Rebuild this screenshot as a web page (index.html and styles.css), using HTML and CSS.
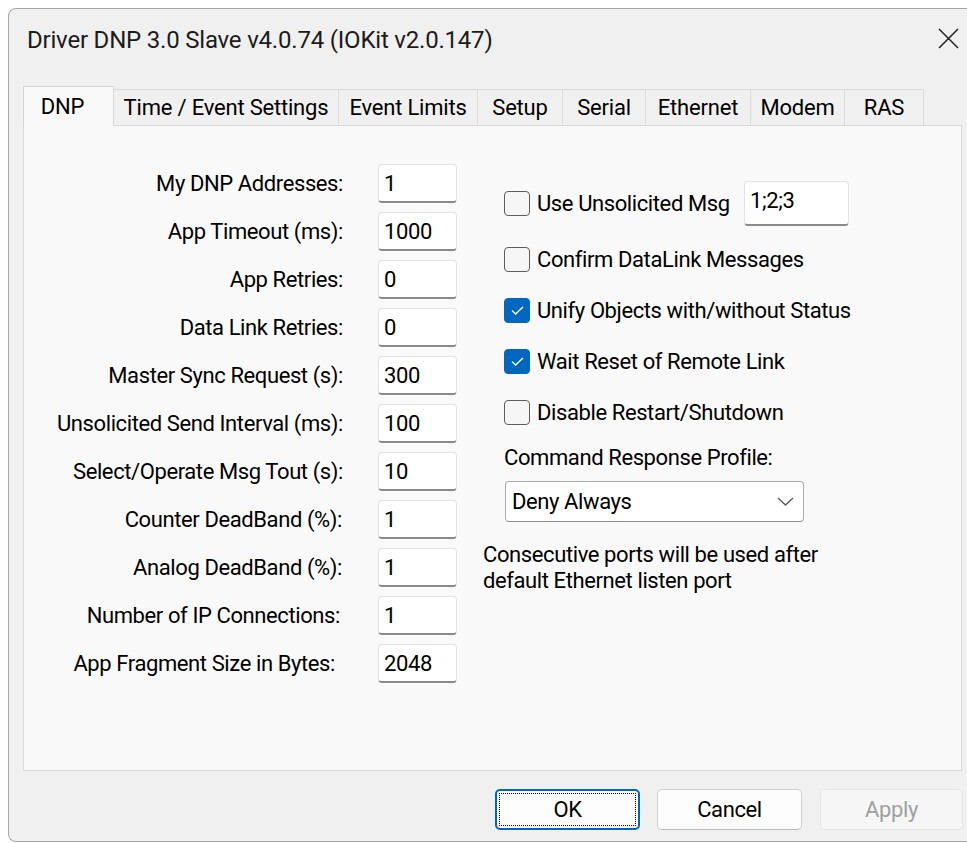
FILE: index.html
```html
<!DOCTYPE html>
<html lang="en">
<head>
<meta charset="utf-8">
<title>Driver DNP 3.0 Slave</title>
<link rel="stylesheet" href="styles.css">
</head>
<body>
<div class="window">
  <header class="titlebar">
    <span class="title">Driver DNP 3.0 Slave v4.0.74 (IOKit v2.0.147)</span>
    <svg class="close" viewBox="0 0 21 21" aria-label="Close">
      <path d="M1 1 L20 20 M20 1 L1 20" stroke="#1f1f1f" stroke-width="1.5" fill="none"/>
    </svg>
  </header>

  <nav class="tabstrip">
    <div class="tab is-active">DNP</div>
    <div class="tab">Time / Event Settings</div>
    <div class="tab">Event Limits</div>
    <div class="tab">Setup</div>
    <div class="tab">Serial</div>
    <div class="tab">Ethernet</div>
    <div class="tab">Modem</div>
    <div class="tab">RAS</div>
  </nav>

  <section class="panel">
    <div class="fields">
      <label class="lbl">My DNP Addresses:</label>
      <input class="field" type="text" value="1">
      <label class="lbl">App Timeout (ms):</label>
      <input class="field" type="text" value="1000">
      <label class="lbl">App Retries:</label>
      <input class="field" type="text" value="0">
      <label class="lbl">Data Link Retries:</label>
      <input class="field" type="text" value="0">
      <label class="lbl">Master Sync Request (s):</label>
      <input class="field" type="text" value="300">
      <label class="lbl">Unsolicited Send Interval (ms):</label>
      <input class="field" type="text" value="100">
      <label class="lbl">Select/Operate Msg Tout (s):</label>
      <input class="field" type="text" value="10">
      <label class="lbl lbl-in1">Counter DeadBand (%):</label>
      <input class="field" type="text" value="1">
      <label class="lbl lbl-in1">Analog DeadBand (%):</label>
      <input class="field" type="text" value="1">
      <label class="lbl lbl-in3">Number of IP Connections:</label>
      <input class="field" type="text" value="1">
      <label class="lbl lbl-in8">App Fragment Size in Bytes:</label>
      <input class="field" type="text" value="2048">
    </div>

    <div class="options">
      <div class="opt opt-first">
        <span class="check"></span>
        <span class="opt-text">Use Unsolicited Msg</span>
        <textarea class="multi" rows="1">1;2;3</textarea>
      </div>
      <div class="opt">
        <span class="check"></span>
        <span class="opt-text">Confirm DataLink Messages</span>
      </div>
      <div class="opt">
        <span class="check is-checked"><svg viewBox="0 0 13 9"><path d="M1 4.6 L4.6 8 L12 1" stroke="#fff" stroke-width="1.4" fill="none"/></svg></span>
        <span class="opt-text">Unify Objects with/without Status</span>
      </div>
      <div class="opt">
        <span class="check is-checked"><svg viewBox="0 0 13 9"><path d="M1 4.6 L4.6 8 L12 1" stroke="#fff" stroke-width="1.4" fill="none"/></svg></span>
        <span class="opt-text">Wait Reset of Remote Link</span>
      </div>
      <div class="opt">
        <span class="check"></span>
        <span class="opt-text">Disable Restart/Shutdown</span>
      </div>

      <div class="caption">Command Response Profile:</div>
      <div class="select">
        <span class="select-value">Deny Always</span>
        <svg class="chevron" viewBox="0 0 17 9"><path d="M1 1 L8.5 8 L16 1" stroke="#5a5a5a" stroke-width="1.3" fill="none"/></svg>
      </div>

      <p class="note">Consecutive ports will be used after<br>default Ethernet listen port</p>
    </div>
  </section>

  <footer class="actions">
    <button class="btn btn-default" type="button">OK</button>
    <button class="btn" type="button">Cancel</button>
    <button class="btn btn-disabled" type="button" disabled>Apply</button>
  </footer>
</div>
</body>
</html>
```

FILE: styles.css
```css
* {
  box-sizing: border-box;
}

html,
body {
  margin: 0;
  height: 100%;
}

body {
  background: #ffffff;
  overflow: hidden;
  font-family: Roboto, "Liberation Sans", sans-serif;
  font-size: 22px;
  letter-spacing: -0.4px;
  color: #000;
}

/* dialog frame */
.window {
  margin: 8px 0 0 8px;
  width: 959px;
  height: 834px;
  background: #f0f0f0;
  border: 1px solid #a8a8a8;
  border-right: none;
  border-radius: 8px 0 0 8px;
  display: flex;
  flex-direction: column;
}

.titlebar {
  height: 62px;
  flex: none;
  display: flex;
  align-items: center;
  padding: 0 8px 0 18px;
}

.title {
  flex: 1;
  font-size: 24px;
  letter-spacing: -0.2px;
  color: #1b1b1b;
  white-space: nowrap;
}

.close {
  width: 21px;
  height: 21px;
  margin-bottom: 4px;
}

/* property sheet tabs */
.tabstrip {
  flex: none;
  height: 39px;
  margin-top: 15px;
  padding-left: 14px;
  display: flex;
  align-items: flex-end;
}

.tab {
  height: 36px;
  margin-left: -1px;
  display: flex;
  align-items: center;
  justify-content: center;
  background: #f0f0f0;
  border: 1px solid #dcdcdc;
  border-bottom: none;
  letter-spacing: -0.2px;
  white-space: nowrap;
}

.tab:nth-child(1) { width: 91px; margin-left: 0; }
.tab:nth-child(2) { width: 226px; }
.tab:nth-child(3) { width: 140px; }
.tab:nth-child(4) { width: 86px; }
.tab:nth-child(5) { width: 84px; }
.tab:nth-child(6) { width: 106px; }
.tab:nth-child(7) { width: 95px; }
.tab:nth-child(8) { width: 80px; }

.tab.is-active {
  height: 40px;
  margin-bottom: -1px;
  padding-right: 12px;
  background: #f9f9f9;
  border-color: #d6d6d6;
  position: relative;
  z-index: 1;
}

.panel {
  flex: none;
  height: 646px;
  margin: 0 5px 0 14px;
  background: #f9f9f9;
  border: 1px solid #d9d9d9;
  display: flex;
  align-items: flex-start;
}

/* left column: labelled numeric fields */
.fields {
  padding-top: 38px;
  display: grid;
  grid-template-columns: 319px 79px;
  grid-auto-rows: 39px;
  column-gap: 35px;
  row-gap: 9px;
}

.lbl {
  align-self: center;
  text-align: right;
  white-space: nowrap;
}

.lbl-in1 { padding-right: 1px; }
.lbl-in3 { padding-right: 3px; }
.lbl-in8 { padding-right: 8px; }

.field {
  width: 79px;
  height: 39px;
  margin: 0;
  padding: 0 5px;
  background: #fff;
  border: 1px solid #e3e3e3;
  border-bottom: 2px solid #8a8a8a;
  border-radius: 4px;
  font: inherit;
  letter-spacing: inherit;
  color: #000;
}

/* right column: options */
.options {
  margin-left: 47px;
  padding-top: 55px;
  display: flex;
  flex-direction: column;
  align-items: flex-start;
}

.opt {
  height: 26px;
  margin-top: 25px;
  display: flex;
  align-items: center;
  white-space: nowrap;
}

.opt-first {
  height: 45px;
  margin-top: 0;
}

.opt-first + .opt {
  margin-top: 20px;
}

.opt-first .opt-text {
  width: 207px;
}

.check {
  width: 26px;
  height: 25px;
  margin-right: 7px;
  flex: none;
  display: flex;
  align-items: center;
  justify-content: center;
  background: #f6f6f6;
  border: 1px solid #5e5e5e;
  border-radius: 4px;
}

.check.is-checked {
  background: #0067c0;
  border-color: #0067c0;
}

.check svg {
  width: 13px;
  height: 9px;
}

.multi {
  width: 105px;
  height: 45px;
  margin: 0;
  padding: 6px 5px 0;
  background: #fff;
  border: 1px solid #e3e3e3;
  border-bottom: 2px solid #8a8a8a;
  border-radius: 4px;
  font: inherit;
  letter-spacing: inherit;
  line-height: 26px;
  color: #000;
  resize: none;
  overflow: hidden;
}

.caption {
  margin-top: 18px;
  line-height: 30px;
  white-space: nowrap;
}

.select {
  width: 299px;
  height: 41px;
  margin: 8px 0 0 1px;
  padding: 0 9px 0 6px;
  display: flex;
  align-items: center;
  justify-content: space-between;
  background: #fff;
  border: 1px solid #ababab;
  border-bottom-color: #8e8e8e;
  border-radius: 4px;
}

.chevron {
  width: 17px;
  height: 9px;
}

.note {
  margin: 20px 0 0 -21px;
  line-height: 26px;
  white-space: nowrap;
}

/* dialog buttons */
.actions {
  flex: none;
  margin-top: 18px;
  padding-right: 4px;
  display: flex;
  justify-content: flex-end;
  gap: 17px;
}

.btn {
  width: 145px;
  height: 41px;
  padding: 0;
  background: #fdfdfd;
  border: 1px solid #d0d0d0;
  border-bottom-color: #b9b9b9;
  border-radius: 5px;
  font: inherit;
  letter-spacing: inherit;
  color: #000;
}

.btn-default {
  border: 2px solid #0067c0;
  outline: 1px dotted #000;
  outline-offset: -5px;
}

.btn-disabled {
  width: 143px;
  margin-left: 1px;
  background: #f6f6f6;
  border-color: #e6e6e6;
  color: #a0a0a0;
}
```
